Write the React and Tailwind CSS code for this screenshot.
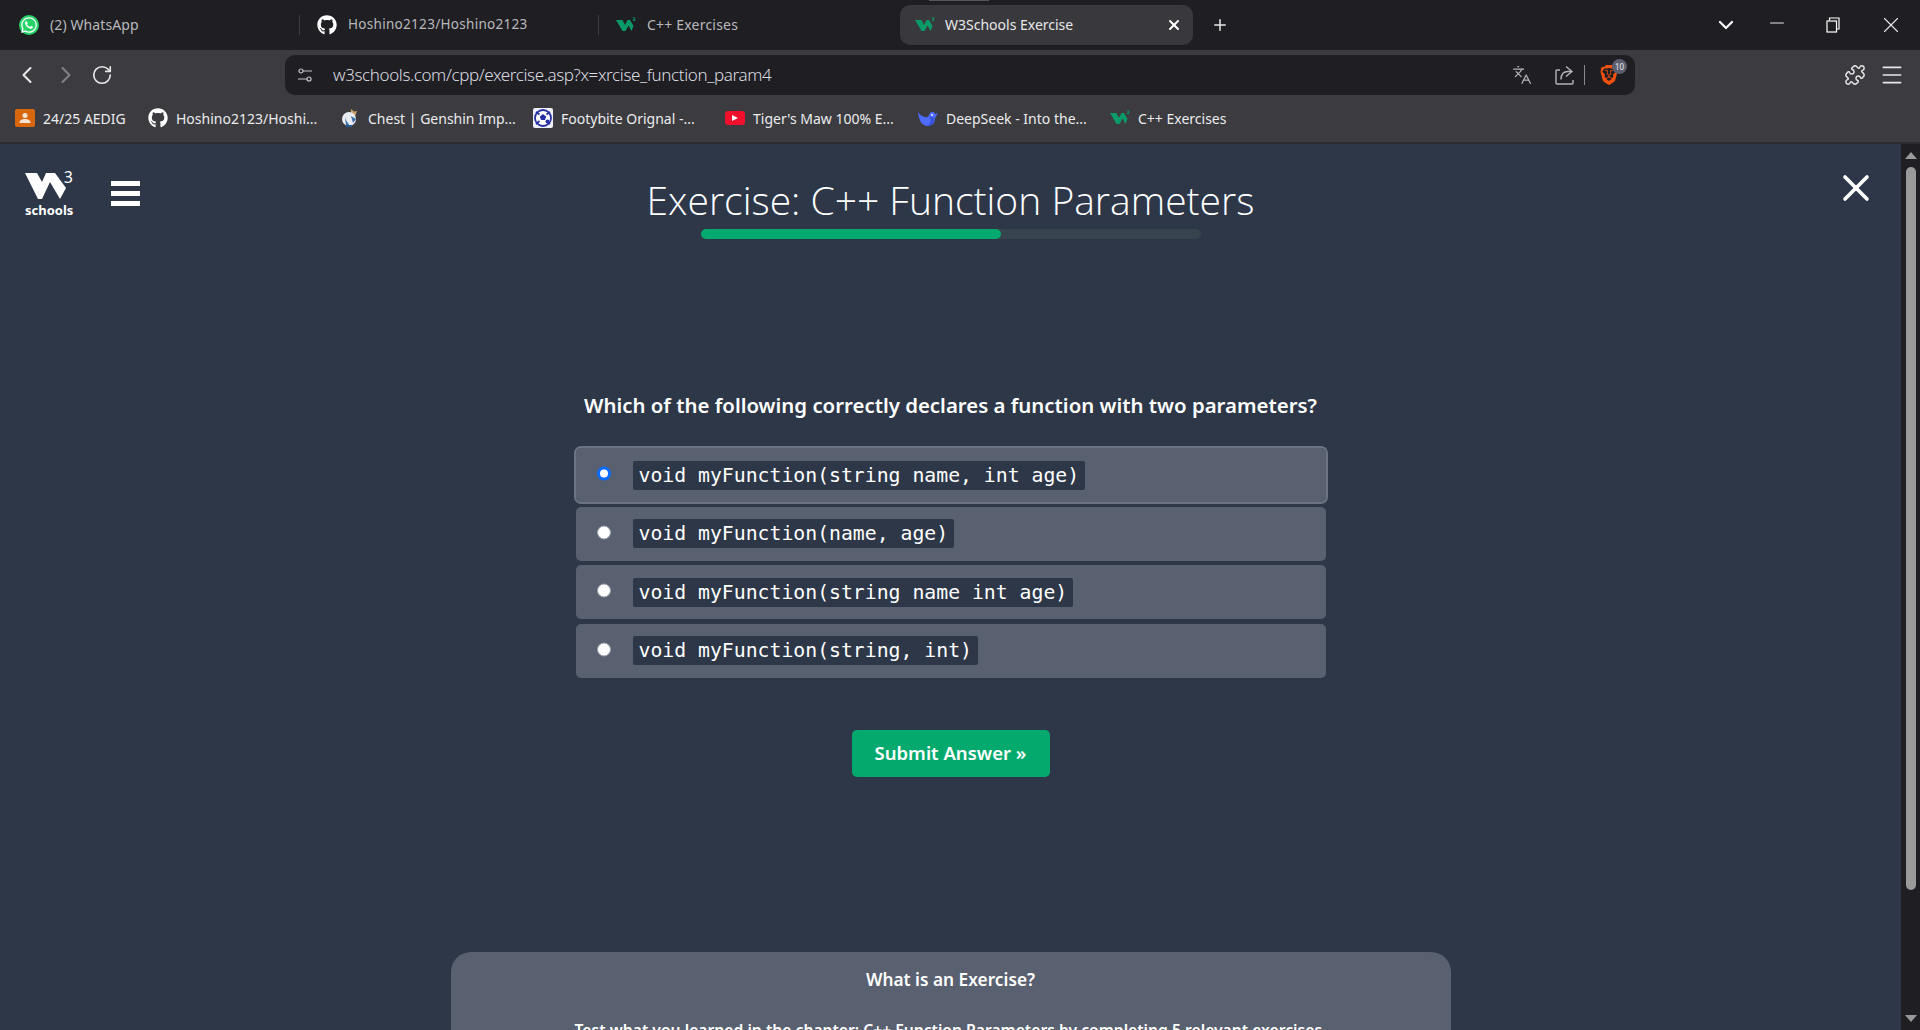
import React from 'react';
import { ChevronLeft, ChevronRight, RotateCw, ChevronDown, Minus, X, Plus, Languages, Puzzle, Menu } from 'lucide-react';
import { FaGithub, FaWhatsapp } from 'react-icons/fa';
import { SiBrave } from 'react-icons/si';

const options = [
  'void myFunction(string name, int age)',
  'void myFunction(name, age)',
  'void myFunction(string name int age)',
  'void myFunction(string, int)',
];

const W3Icon = ({ color = '#0a9a68', className = '' }) => (
  <svg viewBox="0 0 20 16" className={className}>
    <path d="M0 3h6.500l2.500 5 2.500-5h2.500l3.500 6-2 5-3-5.500-3 5.500h-3z" fill={color} />
    <path d="M16.500 .5h2.700v3.500h-2.400v-.7h1.600v-.8h-1.200v-.6h1.200v-.7h-1.900z" fill={color} />
  </svg>
);

const Whatsapp = () => (
  <span className="w-5 h-5 rounded-full bg-[#25d366] flex items-center justify-center text-white">
    <FaWhatsapp className="w-[18px] h-[18px]" />
  </span>
);

const PersonIcon = () => (
  <span className="w-5 h-[18px] rounded-[2px] bg-[#d9670f] flex items-center justify-center">
    <svg viewBox="0 0 20 18" className="w-5 h-[18px]">
      <circle cx="10" cy="6.500" r="2.500" fill="#f7e4d2" />
      <path d="M4.500 14c0-3 2.500-4 5.500-4s5.500 1 5.500 4z" fill="#f7e4d2" />
    </svg>
  </span>
);

const GenshinIcon = () => (
  <svg viewBox="0 0 20 20" className="w-5 h-5">
    <path d="M11 1l3 2.500 3-.5-1.500 4.500-5 .5z" fill="#c9a26b" />
    <circle cx="9" cy="11" r="7" fill="#e8edf4" />
    <path d="M5 9c1 4 3 6 5 9l-4-1zM11 8l5 3-3 4z" fill="#3d6fa8" />
    <path d="M6 17h6v2H6z" fill="#2c5c96" />
  </svg>
);

const BallIcon = () => (
  <svg viewBox="0 0 20 20" className="w-5 h-5">
    <rect width="20" height="20" rx="2" fill="#eef0fb" />
    <circle cx="10" cy="10" r="8" fill="#fff" stroke="#2630a0" strokeWidth="1.800" />
    <path d="M10 6l3.200 2.400-1.200 3.600H8l-1.200-3.600z" fill="#2630a0" />
    <path d="M3 4l3.500 2.500M17 4l-3.500 2.500M3 16l3.500-3M17 16l-3.500-3" stroke="#2630a0" strokeWidth="1.800" />
    <circle cx="14.500" cy="13.500" r="2" fill="#2630a0" />
  </svg>
);

const DeepSeekIcon = () => (
  <svg viewBox="0 0 20 20" className="w-5 h-5">
    <path d="M0 4c1 9 4 14 10 14 5 0 7-4 7-8l3-5-3 1c-1-3-4-3-5.500 0-1 2.500-2 4-4.500 3C4.500 8.500 2 7 0 4z" fill="#4d6bfe" />
    <path d="M11 8c1 1 2 3 2 5l-3 5c3 0 6-2 6-8z" fill="#3350d8" />
    <circle cx="14" cy="7" r=".9" fill="#fff" />
  </svg>
);

const bookmarks = [
  { icon: <PersonIcon />, label: '24/25 AEDIG', width: 'w-[133px]' },
  { icon: <FaGithub className="w-5 h-5 text-white" />, label: 'Hoshino2123/Hoshi...', width: 'w-[192px]' },
  { icon: <GenshinIcon />, label: 'Chest | Genshin Imp...', width: 'w-[193px]' },
  { icon: <BallIcon />, label: 'Footybite Orignal -...', width: 'w-[192px]' },
  { icon: <span className="w-5 h-[14px] rounded-[3px] bg-[#f0102c] flex items-center justify-center"><span className="border-l-[6px] border-l-white border-y-[3.500px] border-y-transparent" /></span>, label: "Tiger's Maw 100% E...", width: 'w-[193px]' },
  { icon: <DeepSeekIcon />, label: 'DeepSeek - Into the...', width: 'w-[192px]' },
  { icon: <W3Icon className="w-5 h-4" />, label: 'C++ Exercises', width: 'w-[125px]' },
];

const BrowserChrome = () => (
  <div className="font-['Noto_Sans',sans-serif]">
    <div className="h-[50px] bg-[#1e1e23] flex items-center relative">
      <span className="absolute top-0 left-[929px] w-[60px] h-px bg-[#55555a]" />
      <div className="w-[300px] h-5 flex items-center pl-[19px] border-r border-[#3b3b40]">
        <Whatsapp />
        <span className="ml-[11px] -mt-[2px] text-[14px] tracking-[0.1px] text-[#b9b9bd]">(2) WhatsApp</span>
      </div>
      <div className="w-[299px] h-5 flex items-center pl-[17px] border-r border-[#3b3b40]">
        <FaGithub className="w-5 h-5 text-white" />
        <span className="ml-[11px] -mt-[2px] text-[13.500px] tracking-[0.3px] text-[#b9b9bd]">Hoshino2123/Hoshino2123</span>
      </div>
      <div className="w-[301px] h-5 flex items-center pl-[17px]">
        <W3Icon className="w-5 h-4" />
        <span className="ml-[11px] -mt-[2px] text-[14px] tracking-[0.2px] text-[#b9b9bd]">C++ Exercises</span>
      </div>
      <div className="w-[293px] h-10 rounded-[10px] bg-[#38383d] flex items-center pl-[15px] pr-[11px]">
        <W3Icon className="w-5 h-4" />
        <span className="ml-[10px] -mt-[2px] text-[14px] text-[#e8e8ea]">W3Schools Exercise</span>
        <X className="ml-auto w-[16px] h-[16px] text-white" strokeWidth={3} />
      </div>
      <Plus className="ml-[18px] w-[18px] h-[18px] text-[#e8e8ea]" strokeWidth={2} />
      <div className="ml-auto flex items-center h-full">
        <ChevronDown className="w-6 h-6 text-white" strokeWidth={2.200} />
        <Minus className="ml-[28px] w-[22px] h-[22px] text-[#e8e8ea] -translate-y-[2px]" strokeWidth={1.200} />
        <svg viewBox="0 0 14 16" className="ml-[38px] w-[14px] h-4 text-white" fill="none" stroke="currentColor" strokeWidth="1.200">
          <rect x="1" y="4" width="9.500" height="11" />
          <path d="M3.500 3.500V1h9.500v11h-2" />
        </svg>
        <X className="ml-[38px] mr-[16px] w-[26px] h-[26px] text-[#e8e8ea]" strokeWidth={1} />
      </div>
    </div>

    <div className="h-[94px] bg-[#3b3b40] border-b-2 border-[#2b2b30]">
      <div className="h-[50px] flex items-center">
        <ChevronLeft className="ml-[13px] w-7 h-7 text-[#e8e8ea]" strokeWidth={1.800} />
        <ChevronRight className="ml-[11px] w-7 h-7 text-[#808085]" strokeWidth={1.800} />
        <RotateCw className="ml-[11px] w-[22px] h-[22px] text-[#e8e8ea]" strokeWidth={1.800} />
        <div className="ml-[172px] w-[1350px] h-10 rounded-[10px] bg-[#1e1e23] flex items-center">
          <svg viewBox="0 0 16 16" className="ml-[12px] w-4 h-4 text-[#c8c8cc]" fill="none" stroke="currentColor" strokeWidth="1.200">
            <circle cx="4" cy="4" r="2" />
            <circle cx="12" cy="12" r="2" />
            <path d="M6 4h9M1 12h9" />
          </svg>
          <span className="ml-[20px] text-[17px] font-light tracking-[-0.38px] text-[#dcdce0]">w3schools.com/cpp/exercise.asp?x=xrcise_function_param4</span>
          <Languages className="ml-auto w-5 h-5 text-[#b4b4b8]" strokeWidth={1.500} />
          <svg viewBox="0 0 20 20" className="ml-[22px] w-5 h-5 text-[#b4b4b8]" fill="none" stroke="currentColor" strokeWidth="1.400">
            <path d="M6 5H3a1 1 0 00-1 1v12a1 1 0 001 1h15a1 1 0 001-1v-3" />
            <path d="M12 1.500l6 5-6 5M18 6.500h-4c-4.500 0-7 3-7 8" />
          </svg>
          <span className="ml-[10px] w-px h-5 bg-[#8a8a8e]" />
          <span className="ml-[14px] relative w-5 h-6 flex items-center justify-center">
            <SiBrave className="w-5 h-6 text-[#f1500d]" />
            <span className="absolute -top-[4px] -right-[8px] w-[15px] h-[15px] rounded-full bg-[#5c5e6e] text-[8px] leading-[15px] text-center text-[#e8e8ea]">10</span>
          </span>
          <span className="w-[16px]" />
        </div>
        <Puzzle className="ml-[209px] w-[22px] h-[22px] text-[#e8e8ea]" strokeWidth={1.600} />
        <Menu className="ml-[13px] w-[26px] h-[26px] text-[#e8e8ea]" strokeWidth={1.500} />
      </div>
      <div className="h-[36px] flex items-center pl-[15px]">
        {bookmarks.map((b, i) => (
          <div key={i} className={`${b.width} flex items-center`}>
            {b.icon}
            <span className="ml-2 text-[14px] whitespace-nowrap text-[#ececee]">{b.label}</span>
          </div>
        ))}
      </div>
    </div>
  </div>
);

const Logo = () => (
  <div className="w-[48px] relative">
    <svg viewBox="0 0 48 29" className="w-[48px] h-[29px]">
      <path d="M0 2h12l5 9 4-9h9l11 15-6 11-10-17-8 17h-4z" fill="#fff" />
    </svg>
    <span className="absolute -top-[1px] right-0 text-[16px] leading-[14px] text-white">3</span>
    <div className="mt-[3px] text-[13px] leading-[14px] font-bold text-white text-center">schools</div>
  </div>
);

export default function App() {
  return (
    <div className="h-[1030px] overflow-hidden flex flex-col bg-[#2d3748]">
      <BrowserChrome />
      <div className="flex-1 flex min-h-0">
        <main className="flex-1 min-w-0 flex flex-col items-center font-['Noto_Sans',sans-serif] text-white">
          <header className="w-full shrink-0 flex items-start">
            <div className="w-[200px] pt-[27px] pl-[25px] flex items-start">
              <Logo />
              <div className="ml-[38px] mt-[10px] w-[29px] flex flex-col gap-[5px]">
                <span className="h-[5px] bg-white" />
                <span className="h-[5px] bg-white" />
                <span className="h-[5px] bg-white" />
              </div>
            </div>
            <div className="flex-1 flex flex-col items-center pt-[31px]">
              <h1 className="text-[39px] leading-[50px] font-light font-['Open_Sans',sans-serif]">Exercise: C++ Function Parameters</h1>
              <div className="mt-[4px] w-[500px] h-[10px] rounded-full bg-[#38444d]">
                <div className="w-[60%] h-full rounded-full bg-[#04aa6d]" />
              </div>
            </div>
            <div className="w-[200px] flex justify-end pt-[22px] pr-[23px]">
              <X className="w-[44px] h-[44px] text-white" strokeWidth={2} />
            </div>
          </header>

          <h2 className="mt-[150px] shrink-0 text-[20.400px] leading-[32px] font-semibold text-center">Which of the following correctly declares a function with two parameters?</h2>

          <div className="mt-[27px] w-[750px] shrink-0 flex flex-col gap-[4.500px]">
            {options.map((opt, i) => (
              <label key={i} className={`h-[54px] rounded-[5px] bg-[#596070] flex items-center pl-[21px] ${i === 0 ? 'outline-2 outline-[#6c7483]' : ''}`}>
                <span className={`w-[14px] h-[14px] rounded-full bg-white shrink-0 -translate-y-[1.500px] ${i === 0 ? 'border-[3.500px] border-[#0a6cff]' : 'border border-[#9aa0aa]'}`} />
                <code className="ml-[22px] px-[6px] h-[29px] leading-[29px] rounded-[2px] bg-[#2d3748] text-[19.800px] text-white font-['DejaVu_Sans_Mono',monospace]">{opt}</code>
              </label>
            ))}
          </div>

          <button className="mt-[52px] shrink-0 w-[198px] h-[47px] rounded-[5px] bg-[#04aa6d] text-[18.500px] font-semibold text-white">Submit Answer »</button>

          <section className="mt-[175px] w-[1000px] shrink-0 rounded-t-[20px] bg-[#596070] flex flex-col items-center pt-[14px] pb-8">
            <h3 className="text-[17.300px] leading-[28px] font-semibold">What is an Exercise?</h3>
            <p className="mt-[22px] text-[15.700px] leading-[28px] font-semibold">Test what you learned in the chapter: C++ Function Parameters by completing 5 relevant exercises.</p>
          </section>
        </main>

        <div className="w-[19px] bg-[#1e1e23] flex flex-col items-center pt-[8px]">
          <span className="border-x-[6px] border-x-transparent border-b-[7px] border-b-[#9a9a9a]" />
          <span className="mt-[8px] w-[10px] h-[723px] rounded-full bg-[#9a9a9a]" />
          <span className="mt-auto mb-[8px] border-x-[6px] border-x-transparent border-t-[7px] border-t-[#9a9a9a]" />
        </div>
      </div>
    </div>
  );
}
